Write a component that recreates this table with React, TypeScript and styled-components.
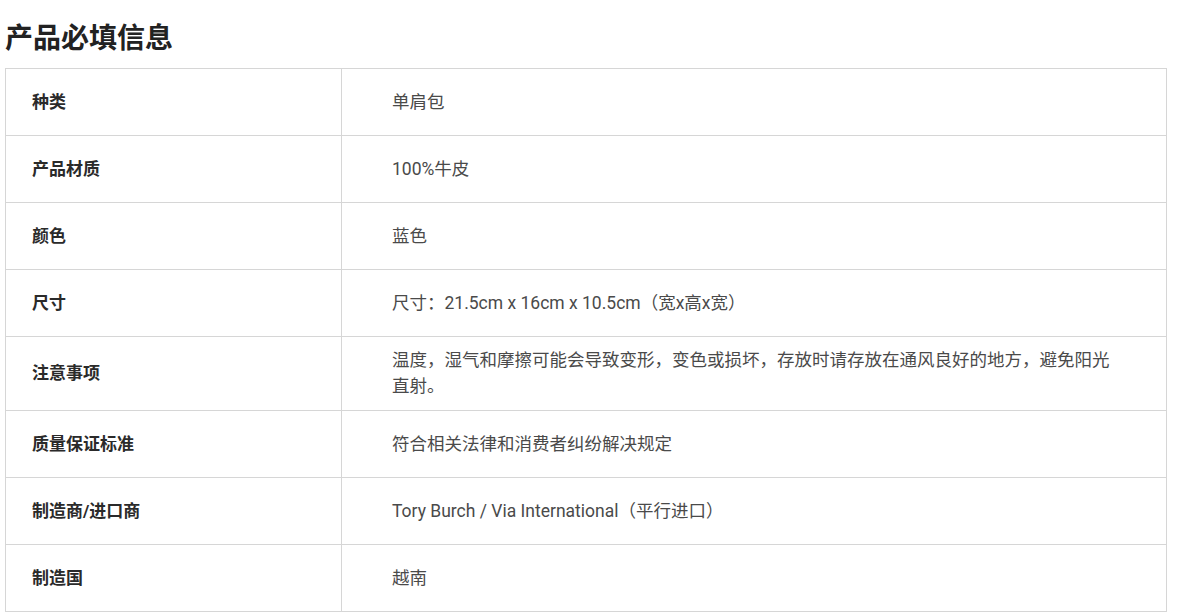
import React from "react"
import styled, { createGlobalStyle } from "styled-components"

type Row = {
   label: string
   value: string
}

const rows: Row[] = [
   { label: "种类", value: "单肩包" },
   { label: "产品材质", value: "100%牛皮" },
   { label: "颜色", value: "蓝色" },
   { label: "尺寸", value: "尺寸：21.5cm x 16cm x 10.5cm（宽x高x宽）" },
   {
      label: "注意事项",
      value: "温度，湿气和摩擦可能会导致变形，变色或损坏，存放时请存放在通风良好的地方，避免阳光直射。",
   },
   { label: "质量保证标准", value: "符合相关法律和消费者纠纷解决规定" },
   { label: "制造商/进口商", value: "Tory Burch / Via International（平行进口）" },
   { label: "制造国", value: "越南" },
]

function App() {
   return (
      <>
         <GlobalStyle />
         <Page>
            <Title>产品必填信息</Title>
            <InfoTable>
               <tbody>
                  {rows.map(row => (
                     <tr key={row.label}>
                        <LabelCell>{row.label}</LabelCell>
                        <ValueCell>{row.value}</ValueCell>
                     </tr>
                  ))}
               </tbody>
            </InfoTable>
         </Page>
      </>
   )
}

const GlobalStyle = createGlobalStyle`
   html, body {
      margin: 0;
      padding: 0;
      background: #fff;
      overflow: hidden;
   }
   body {
      font-family: Roboto, "Noto Sans CJK SC", "Noto Sans", sans-serif;
      color: #333;
   }
`

const Page = styled.div`
   padding: 19px 17px 0 5px;
`

const Title = styled.h2`
   margin: 0 0 9px;
   font-size: 28px;
   line-height: 40px;
   font-weight: 700;
   color: #222;
`

const InfoTable = styled.table`
   width: 100%;
   border-collapse: collapse;
   border: 1px solid #d6d6d6;
   line-height: 26.4px;

   td {
      border: 1px solid #d6d6d6;
      height: 67px;
      box-sizing: border-box;
      vertical-align: middle;
      padding: 10px 0;
   }
`

const LabelCell = styled.td`
   width: 336px;
   padding-left: 26px !important;
   font-size: 17px;
   font-weight: 700;
   color: #2a2a2a;
`

const ValueCell = styled.td`
   padding-left: 50px !important;
   padding-right: 50px !important;
   font-size: 17.5px;
   color: #4a4a4a;
`

export default App
